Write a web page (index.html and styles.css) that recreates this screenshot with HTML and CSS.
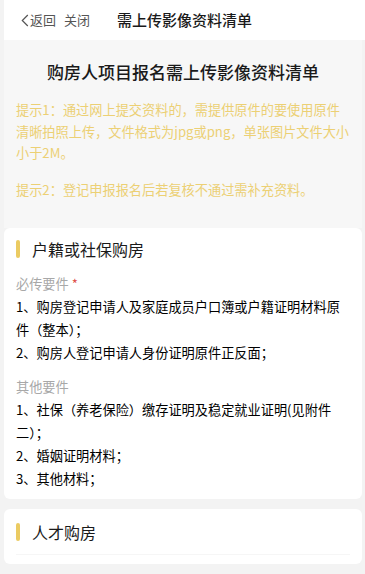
FILE: index.html
```html
<!DOCTYPE html>
<html lang="zh">
<head>
<meta charset="utf-8">
<link rel="stylesheet" href="styles.css">
</head>
<body>
<div class="page">
  <header class="topbar">
    <span class="back">
      <svg class="chev" width="8" height="13" viewBox="0 0 8 13"><path d="M6.8 1 L1.3 6.5 L6.8 12" fill="none" stroke="#555" stroke-width="1.2"/></svg>返回</span>
    <span class="close">关闭</span>
    <span class="nav-title">需上传影像资料清单</span>
  </header>
  <main class="content">
    <section class="intro">
      <h1 class="main-title">购房人项目报名需上传影像资料清单</h1>
      <p class="hint">提示1：通过网上提交资料的，需提供原件的要使用原件清晰拍照上传，文件格式为jpg或png，单张图片文件大小小于2M。</p>
      <p class="hint">提示2：登记申报报名后若复核不通过需补充资料。</p>
    </section>
    <section class="card">
      <h2 class="card-title"><span class="bar"></span>户籍或社保购房</h2>
      <div class="label">必传要件 <span class="req">*</span></div>
      <p class="item">1、购房登记申请人及家庭成员户口簿或户籍证明材料原件（整本）；</p>
      <p class="item">2、购房人登记申请人身份证明原件正反面；</p>
      <div class="label label-gap">其他要件</div>
      <p class="item">1、社保（养老保险）缴存证明及稳定就业证明(见附件二）；</p>
      <p class="item">2、婚姻证明材料；</p>
      <p class="item">3、其他材料；</p>
    </section>
    <section class="card card-next">
      <h2 class="card-title"><span class="bar"></span>人才购房</h2>
      <div class="divider"></div>
    </section>
  </main>
</div>
</body>
</html>
```
FILE: styles.css
```css
* { box-sizing: border-box; }
html, body { margin: 0; padding: 0; }
body {
  background: #f3f3f3;
  font-family: "Noto Sans CJK SC", "Noto Sans", sans-serif;
  color: #222;
  overflow: hidden;
}
.page { padding-left: 4px; }
.topbar {
  height: 40px;
  background: #fff;
  display: flex;
  align-items: center;
  padding-left: 17px;
}
.back {
  display: flex;
  align-items: center;
  font-size: 13px;
  color: #555;
  line-height: 18px;
}
.chev { margin-right: 1px; }
.close {
  margin-left: 8px;
  font-size: 13px;
  color: #555;
  line-height: 18px;
}
.nav-title {
  margin-left: 27px;
  font-size: 15px;
  font-weight: 500;
  color: #1a1a1a;
  line-height: 20px;
}
.content { margin-right: 3px; }
.intro {
  padding: 20px 12px 28px;
  background: #f7f7f7;
}
.main-title {
  margin: 0;
  text-align: center;
  font-size: 17px;
  line-height: 24px;
  font-weight: 500;
  color: #1a1a1a;
}
.hint {
  margin: 15px 0 0;
  font-size: 13.2px;
  line-height: 21.5px;
  color: #ecd074;
}
.card {
  background: #fff;
  border-radius: 6px;
  padding: 10px 12px 9px;
}
.card-next { margin-top: 10px; padding-top: 12px; }
.card-title {
  margin: 0;
  display: flex;
  align-items: center;
  font-size: 16px;
  font-weight: 400;
  line-height: 22px;
  color: #1a1a1a;
}
.bar {
  width: 4px;
  height: 18px;
  border-radius: 2px;
  background: #ebcb62;
  margin-right: 12px;
}
.label {
  margin-top: 13px;
  font-size: 13.2px;
  line-height: 22px;
  color: #a8a8a8;
}
.label-gap { margin-top: 12px; }
.req { color: #e0514a; }
.item {
  margin: 0;
  font-size: 13.2px;
  line-height: 23px;
  color: #000;
  font-weight: 400;
}
.divider {
  margin-top: 11px;
  height: 1px;
  background: #f6f6f6;
}
```
